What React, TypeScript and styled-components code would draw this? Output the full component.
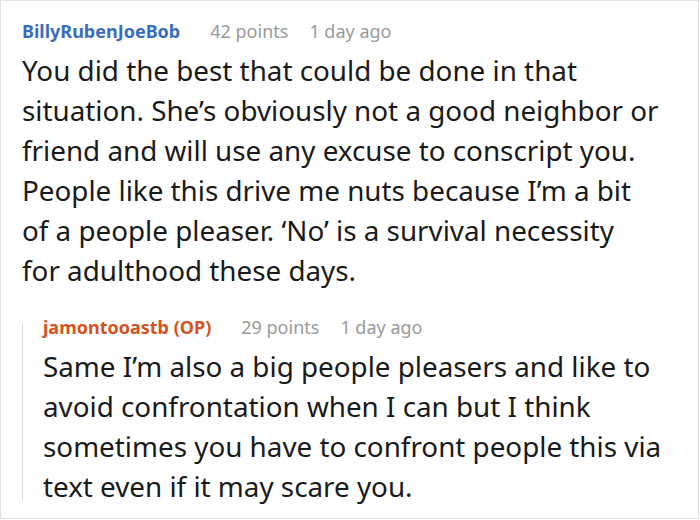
import React from 'react';
import styled, { createGlobalStyle } from 'styled-components';

const GlobalStyle = createGlobalStyle`
  html, body {
    margin: 0;
    padding: 0;
    background: #fff;
  }
  body {
    font-family: 'Noto Sans', 'Open Sans', sans-serif;
  }
`;

const Frame = styled.div`
  box-sizing: border-box;
  width: 699px;
  height: 519px;
  border: 1px solid #e2e2e2;
  padding: 15px 36px 0 21px;
  overflow: hidden;
`;

const Comment = styled.div`
  display: flex;
  flex-direction: column;
`;

const Meta = styled.div`
  display: flex;
  align-items: baseline;
  height: 30px;
  line-height: 30px;
  margin-bottom: 4px;
  white-space: nowrap;
`;

const Author = styled.span<{ $op?: boolean }>`
  font-size: 18px;
  font-weight: 700;
  color: ${p => (p.$op ? '#d4531f' : '#3a6cbe')};
  margin-right: 30px;
`;

const MetaText = styled.span`
  font-size: 18px;
  color: #9a9a9a;
  margin-right: 21px;
`;

const Body = styled.p`
  margin: 0;
  font-size: 27.8px;
  line-height: 40px;
  color: #1a1a1a;
`;

const Replies = styled.div`
  position: relative;
  margin-top: 22px;
  padding-left: 21px;

  &::before {
    content: '';
    position: absolute;
    left: 0;
    top: 11px;
    bottom: 5px;
    width: 1px;
    background: #dedede;
  }
`;

type CommentProps = {
  author: string;
  points: number;
  age: string;
  op?: boolean;
  text: string;
  children?: React.ReactNode;
};

const CommentBlock = ({ author, points, age, op, text, children }: CommentProps) => (
  <Comment>
    <Meta>
      <Author $op={op}>{op ? `${author} (OP)` : author}</Author>
      <MetaText>{points} points</MetaText>
      <MetaText>{age}</MetaText>
    </Meta>
    <Body>{text}</Body>
    {children}
  </Comment>
);

const App = () => (
  <>
    <GlobalStyle />
    <Frame>
      <CommentBlock
        author='BillyRubenJoeBob'
        points={42}
        age='1 day ago'
        text={'You did the best that could be done in that situation. She’s obviously not a good neighbor or friend and will use any excuse to conscript you. People like this drive me nuts because I’m a bit of a people pleaser. ‘No’ is a survival necessity for\u00a0adulthood these days.'}
      >
        <Replies>
          <CommentBlock
            author='jamontooastb'
            op
            points={29}
            age='1 day ago'
            text='Same I’m also a big people pleasers and like to avoid confrontation when I can but I think sometimes you have to confront people this via text even if it may scare you.'
          />
        </Replies>
      </CommentBlock>
    </Frame>
  </>
);

export default App;
